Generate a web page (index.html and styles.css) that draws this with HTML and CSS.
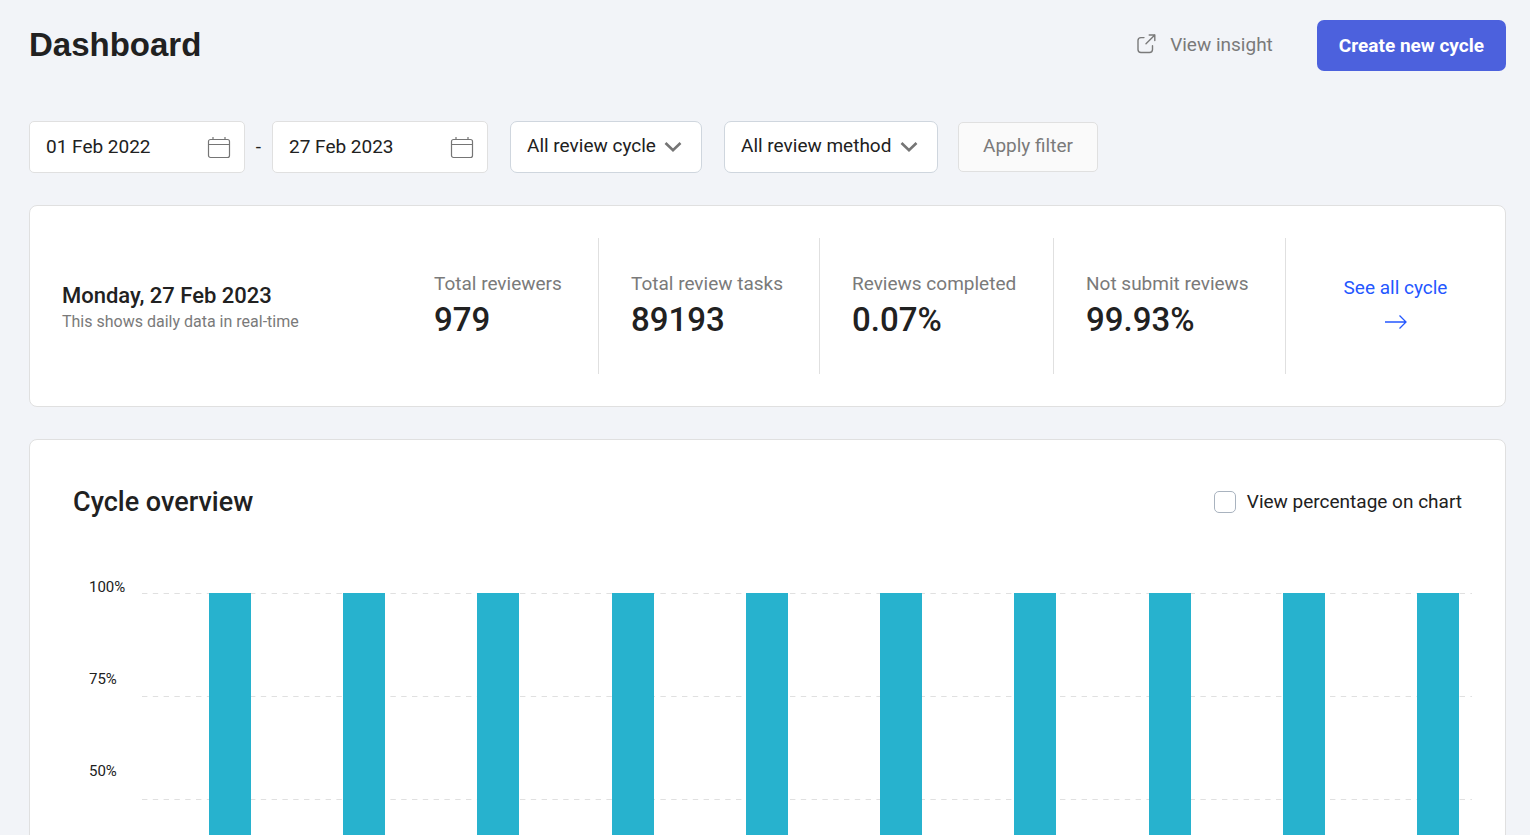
FILE: index.html
```html
<!DOCTYPE html>
<html lang="en">
<head>
    <meta charset="UTF-8">
    <meta name="viewport" content="width=device-width, initial-scale=1.0">
    <title>Dashboard</title>
    <link rel="stylesheet" href="styles.css">
</head>
<body>
    <main class="page">
        <header class="header">
            <h1>Dashboard</h1>
            <div class="header-actions">
                <a class="insight-link" href="#insight">
                    <svg width="20" height="22" viewBox="0 0 20 22" fill="none" stroke="currentColor" stroke-width="1.4" stroke-linecap="round" stroke-linejoin="round">
                        <path d="M8 3.600H5a3 3 0 0 0-3 3V15.500a3 3 0 0 0 3 3h8.500a3 3 0 0 0 3-3V11.800M10 9.700 18.800 1M13.200 1h5.600v5.600"/>
                    </svg>
                    View insight
                </a>
                <button type="button" class="btn-primary">Create new cycle</button>
            </div>
        </header>

        <form class="filters">
            <div class="date-field">
                <input type="text" aria-label="Start date" value="01 Feb 2022">
                <svg class="calendar" width="24" height="24" viewBox="0 0 24 24" fill="none" stroke="currentColor" stroke-width="1.2">
                    <rect x="1.500" y="3.500" width="21" height="18" rx="2"/>
                    <path d="M1.500 8.500h21M6 1v2.500M18 1v2.500"/>
                </svg>
            </div>
            <span class="dash">-</span>
            <div class="date-field">
                <input type="text" aria-label="End date" value="27 Feb 2023">
                <svg class="calendar" width="24" height="24" viewBox="0 0 24 24" fill="none" stroke="currentColor" stroke-width="1.2">
                    <rect x="1.500" y="3.500" width="21" height="18" rx="2"/>
                    <path d="M1.500 8.500h21M6 1v2.500M18 1v2.500"/>
                </svg>
            </div>
            <div class="select-field">
                <select aria-label="Review cycle">
                    <option>All review cycle</option>
                </select>
                <svg class="chevron" width="18" height="12" viewBox="0 0 18 12" fill="none" stroke="currentColor" stroke-width="2.6">
                    <path d="M1.500 2 9 9.300 16.500 2"/>
                </svg>
            </div>
            <div class="select-field">
                <select aria-label="Review method">
                    <option>All review method</option>
                </select>
                <svg class="chevron" width="18" height="12" viewBox="0 0 18 12" fill="none" stroke="currentColor" stroke-width="2.6">
                    <path d="M1.500 2 9 9.300 16.500 2"/>
                </svg>
            </div>
            <button type="submit" class="btn-filter" disabled>Apply filter</button>
        </form>

        <section class="card summary">
            <div class="today">
                <h2>Monday, 27 Feb 2023</h2>
                <p>This shows daily data in real-time</p>
            </div>
            <div class="stat">
                <span class="stat-label">Total reviewers</span>
                <strong class="stat-value">979</strong>
            </div>
            <div class="stat">
                <span class="stat-label">Total review tasks</span>
                <strong class="stat-value">89193</strong>
            </div>
            <div class="stat">
                <span class="stat-label">Reviews completed</span>
                <strong class="stat-value">0.07%</strong>
            </div>
            <div class="stat">
                <span class="stat-label">Not submit reviews</span>
                <strong class="stat-value">99.93%</strong>
            </div>
            <a class="see-all" href="#cycles">
                See all cycle
                <svg width="24" height="16" viewBox="0 0 24 16" fill="none" stroke="currentColor" stroke-width="1.3">
                    <path d="M1 8h21M15.500 1.500 22 8l-6.500 6.500"/>
                </svg>
            </a>
        </section>

        <section class="card overview">
            <div class="overview-head">
                <h2>Cycle overview</h2>
                <label class="check">
                    <input type="checkbox">
                    View percentage on chart
                </label>
            </div>
            <div class="chart">
                <div class="axis">
                    <span>100%</span>
                    <span>75%</span>
                    <span>50%</span>
                </div>
                <div class="plot">
                    <svg class="grid" width="100%" height="414" stroke="#e0e0e0" stroke-dasharray="5.4">
                        <line x1="0" y1="0.5" x2="100%" y2="0.5"/>
                        <line x1="0" y1="103.5" x2="100%" y2="103.5"/>
                        <line x1="0" y1="206.5" x2="100%" y2="206.5"/>
                        <line x1="0" y1="309.5" x2="100%" y2="309.5"/>
                        <line x1="0" y1="412.5" x2="100%" y2="412.5"/>
                    </svg>
                    <div class="bars">
                        <div class="bar"></div>
                        <div class="bar"></div>
                        <div class="bar"></div>
                        <div class="bar"></div>
                        <div class="bar"></div>
                        <div class="bar"></div>
                        <div class="bar"></div>
                        <div class="bar"></div>
                        <div class="bar"></div>
                        <div class="bar"></div>
                    </div>
                </div>
            </div>
        </section>
    </main>
</body>
</html>
```
FILE: styles.css
```css
* {
    box-sizing: border-box;
}

body {
    margin: 0;
    background-color: #f2f4f8;
    color: #212121;
    font-family: Roboto, "Liberation Sans", sans-serif;
    font-size: 19px;
    line-height: 24px;
}

h1, h2, p {
    margin: 0;
}

h2 {
    font-weight: 500;
}

a {
    text-decoration: none;
}

input, select, button {
    font: inherit;
    color: inherit;
}

/* The page scrolls inside its own box */
.page {
    height: 100vh;
    overflow-y: auto;
    scrollbar-width: none;
    padding: 20px 24px 32px 29px;
}

/* Header */
.header {
    display: flex;
    justify-content: space-between;
    align-items: center;
    margin-bottom: 50px;
}

.header h1 {
    padding-bottom: 2px;
    font-family: "Liberation Sans", Arial, sans-serif;
    font-size: 33px;
    line-height: 40px;
}

.header-actions {
    display: flex;
    align-items: center;
    gap: 44px;
}

.insight-link {
    display: flex;
    align-items: center;
    gap: 14px;
    padding-bottom: 2px;
    color: #7a7a7a;
}

.btn-primary {
    height: 51px;
    padding: 0 22px;
    border: none;
    border-radius: 7px;
    background-color: #4c61dd;
    color: #fff;
    font-weight: 700;
    cursor: pointer;
}

/* Filters */
.filters {
    display: flex;
    align-items: center;
    margin-bottom: 32px;
}

.date-field, .select-field {
    position: relative;
}

.date-field input {
    display: block;
    width: 216px;
    height: 52px;
    padding: 0 48px 2px 16px;
    border: 1px solid #e0e0e0;
    border-radius: 5px;
    background-color: #fff;
}

.calendar {
    position: absolute;
    top: 15px;
    right: 14px;
    color: #757575;
}

.dash {
    width: 27px;
    text-align: center;
}

.select-field {
    margin-left: 22px;
}

.select-field select {
    display: block;
    height: 52px;
    padding: 0 45px 2px 16px;
    border: 1px solid #cfd6de;
    border-radius: 7px;
    background-color: #fff;
    appearance: none;
}

.chevron {
    position: absolute;
    top: 20px;
    right: 20px;
    color: #757575;
    pointer-events: none;
}

.btn-filter {
    height: 50px;
    margin-left: 20px;
    padding: 0 24px 2px;
    border: 1px solid #e0e0e0;
    border-radius: 5px;
    background-color: #fafafa;
    color: #7a7a7a;
}

/* Cards */
.card {
    border: 1px solid #e0e0e0;
    border-radius: 8px;
    background-color: #fff;
}

.summary {
    display: grid;
    grid-template-columns: 372fr 197fr 221fr 234fr 232fr 219fr;
    padding: 32px 0;
    margin-bottom: 32px;
}

.today {
    display: flex;
    flex-direction: column;
    justify-content: center;
    padding: 4px 0 0 32px;
}

.today h2 {
    font-size: 22px;
    line-height: 28px;
}

.today p {
    color: #7a7a7a;
    font-size: 16px;
}

.stat {
    display: flex;
    flex-direction: column;
    justify-content: center;
    height: 136px;
    padding-left: 32px;
    border-right: 1px solid #e0e0e0;
}

.stat-label {
    color: #7a7a7a;
    line-height: 28px;
}

.stat-value {
    font-size: 33px;
    font-weight: 500;
    line-height: 44px;
}

.see-all {
    display: flex;
    flex-direction: column;
    align-items: center;
    justify-content: center;
    gap: 14px;
    padding-bottom: 7px;
    color: #2457ff;
}

/* Cycle overview */
.overview {
    padding: 44px 33px 32px 43px;
}

.overview-head {
    display: flex;
    justify-content: space-between;
    align-items: center;
    margin-bottom: 73px;
    padding-right: 10px;
}

.overview-head h2 {
    font-size: 27px;
    line-height: 36px;
}

.check {
    display: flex;
    align-items: center;
    gap: 11px;
}

.check input {
    width: 22px;
    height: 22px;
    margin: 0;
    border: 1px solid #a9b3bf;
    border-radius: 5px;
    background-color: #fff;
    appearance: none;
}

.check input:checked {
    background-color: #4c61dd;
}

/* Chart */
.chart {
    display: flex;
}

.axis {
    display: grid;
    grid-auto-rows: 92px;
    align-content: start;
    width: 69px;
    margin-top: -18px;
    padding-left: 16px;
    font-size: 15px;
}

.plot {
    display: grid;
    flex: 1;
    height: 414px;
}

.grid, .bars {
    grid-area: 1 / 1;
}

.bars {
    display: flex;
    justify-content: space-between;
    padding: 0 13px 0 67px;
}

.bar {
    width: 42px;
    background-color: #27b2ce;
}
```
